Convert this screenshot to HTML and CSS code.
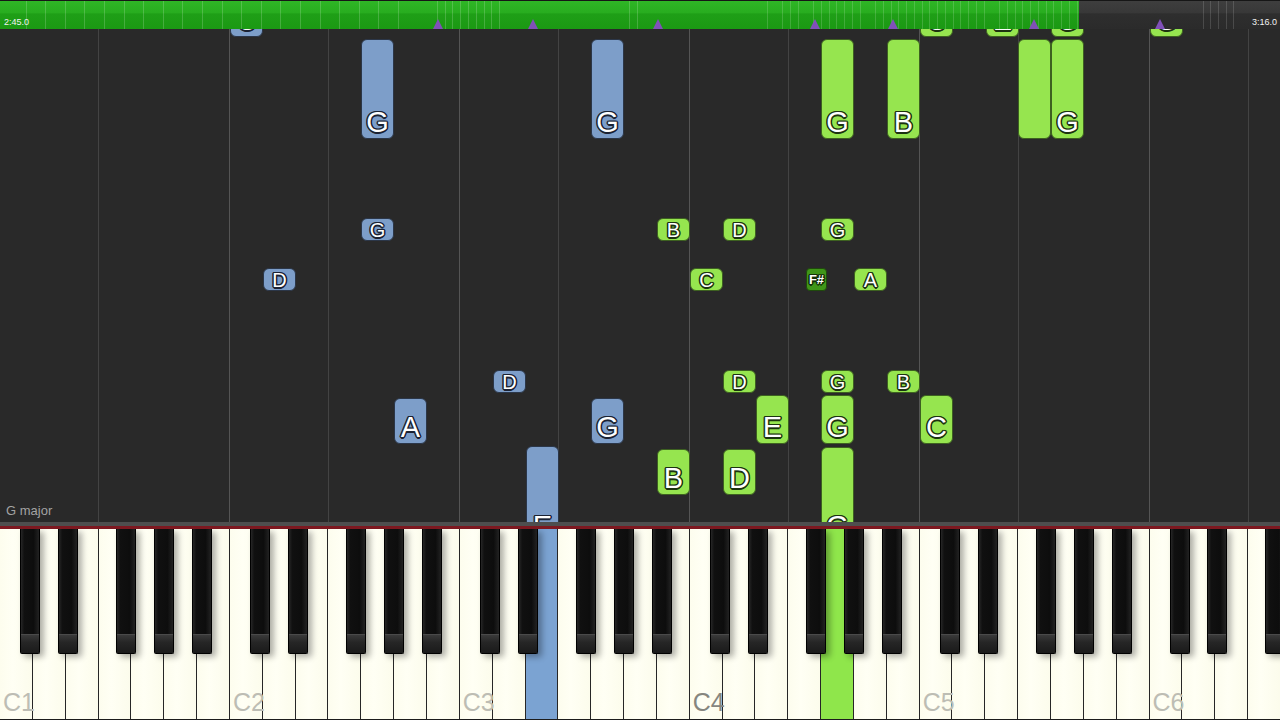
FILE: index.html
```html
<!DOCTYPE html>
<html>
<head>
<meta charset="utf-8">
<link rel="stylesheet" href="styles.css">
</head>
<body>
<div class="screen">
  <div class="bar">
    <div class="played"></div>
    <div class="rest"></div>
    <span class="time start">2:45.0</span>
    <span class="time end">3:16.0</span>
    <i class="mark" style="left:433px"></i>
    <i class="mark" style="left:528px"></i>
    <i class="mark" style="left:653px"></i>
    <i class="mark" style="left:810px"></i>
    <i class="mark" style="left:888px"></i>
    <i class="mark" style="left:1029px"></i>
    <i class="mark" style="left:1155px"></i>
  </div>

  <div class="roll">
    <!-- notes partly hidden under the bar -->
    <div class="note blue lg" style="left:230px;top:-52px;height:60px"><span>C</span></div>
    <div class="note green lg" style="left:920px;top:-52px;height:60px"><span>C</span></div>
    <div class="note green lg" style="left:986px;top:-52px;height:60px"><span>E</span></div>
    <div class="note green lg" style="left:1051px;top:-52px;height:60px"><span>G</span></div>
    <div class="note green lg" style="left:1150px;top:-52px;height:60px"><span>G</span></div>

    <!-- long notes -->
    <div class="note blue lg" style="left:361px;top:10px;height:100px"><span>G</span></div>
    <div class="note blue lg" style="left:591px;top:10px;height:100px"><span>G</span></div>
    <div class="note green lg" style="left:821px;top:10px;height:100px"><span>G</span></div>
    <div class="note green lg" style="left:887px;top:10px;height:100px"><span>B</span></div>
    <div class="note green lg" style="left:1018px;top:10px;height:100px"></div>
    <div class="note green lg" style="left:1051px;top:10px;height:100px"><span>G</span></div>

    <!-- short notes row 1 -->
    <div class="note blue sm" style="left:361px;top:189px"><span>G</span></div>
    <div class="note green sm" style="left:657px;top:189px"><span>B</span></div>
    <div class="note green sm" style="left:723px;top:189px"><span>D</span></div>
    <div class="note green sm" style="left:821px;top:189px"><span>G</span></div>

    <!-- short notes row 2 -->
    <div class="note blue sm" style="left:263px;top:239px"><span>D</span></div>
    <div class="note green sm" style="left:690px;top:239px"><span>C</span></div>
    <div class="note dark tiny" style="left:806px;top:239px"><span>F#</span></div>
    <div class="note green sm" style="left:854px;top:239px"><span>A</span></div>

    <!-- short notes row 3 -->
    <div class="note blue sm" style="left:493px;top:341px"><span>D</span></div>
    <div class="note green sm" style="left:723px;top:341px"><span>D</span></div>
    <div class="note green sm" style="left:821px;top:341px"><span>G</span></div>
    <div class="note green sm" style="left:887px;top:341px"><span>B</span></div>

    <!-- medium notes -->
    <div class="note blue lg" style="left:394px;top:369px;height:46px"><span>A</span></div>
    <div class="note blue lg" style="left:591px;top:369px;height:46px"><span>G</span></div>
    <div class="note green lg" style="left:756px;top:366px;height:49px"><span>E</span></div>
    <div class="note green lg" style="left:821px;top:366px;height:49px"><span>G</span></div>
    <div class="note green lg" style="left:920px;top:366px;height:49px"><span>C</span></div>
    <div class="note green lg" style="left:657px;top:420px;height:46px"><span>B</span></div>
    <div class="note green lg" style="left:723px;top:420px;height:46px"><span>D</span></div>

    <!-- notes reaching the keyboard -->
    <div class="note blue lg" style="left:526px;top:417px;height:97px"><span>E</span></div>
    <div class="note green lg" style="left:821px;top:418px;height:96px"><span>G</span></div>

    <span class="key-name">G major</span>
  </div>

  <div class="rail"></div>

  <div class="keyboard">
    <div class="wk"><i class="bk cs"></i><span class="oct">C1</span></div>
    <div class="wk"><i class="bk ds"></i></div>
    <div class="wk"></div>
    <div class="wk"><i class="bk fs"></i></div>
    <div class="wk"><i class="bk gs"></i></div>
    <div class="wk"><i class="bk as"></i></div>
    <div class="wk"></div>

    <div class="wk"><i class="bk cs"></i><span class="oct">C2</span></div>
    <div class="wk"><i class="bk ds"></i></div>
    <div class="wk"></div>
    <div class="wk"><i class="bk fs"></i></div>
    <div class="wk"><i class="bk gs"></i></div>
    <div class="wk"><i class="bk as"></i></div>
    <div class="wk"></div>

    <div class="wk"><i class="bk cs"></i><span class="oct">C3</span></div>
    <div class="wk"><i class="bk ds"></i></div>
    <div class="wk hl-blue"></div>
    <div class="wk"><i class="bk fs"></i></div>
    <div class="wk"><i class="bk gs"></i></div>
    <div class="wk"><i class="bk as"></i></div>
    <div class="wk"></div>

    <div class="wk"><i class="bk cs"></i><span class="oct mid">C4</span></div>
    <div class="wk"><i class="bk ds"></i></div>
    <div class="wk"></div>
    <div class="wk"><i class="bk fs"></i></div>
    <div class="wk hl-green"><i class="bk gs"></i></div>
    <div class="wk"><i class="bk as"></i></div>
    <div class="wk"></div>

    <div class="wk"><i class="bk cs"></i><span class="oct">C5</span></div>
    <div class="wk"><i class="bk ds"></i></div>
    <div class="wk"></div>
    <div class="wk"><i class="bk fs"></i></div>
    <div class="wk"><i class="bk gs"></i></div>
    <div class="wk"><i class="bk as"></i></div>
    <div class="wk"></div>

    <div class="wk"><i class="bk cs"></i><span class="oct">C6</span></div>
    <div class="wk"><i class="bk ds"></i></div>
    <div class="wk"></div>
    <div class="wk"><i class="bk fs"></i></div>
  </div>
</div>
</body>
</html>
```

FILE: styles.css
```css
* { box-sizing: border-box; }

html, body {
  margin: 0;
  background: #292929;
}

body {
  width: 1280px;
  height: 720px;
  overflow: hidden;
  font-family: "Liberation Sans", Arial, sans-serif;
}

.screen {
  display: flex;
  flex-direction: column;
  height: 720px;
}

/* ---------- top progress bar ---------- */
.bar {
  position: relative;
  flex: none;
  height: 29px;
  display: flex;
  border-top: 1px solid #161616;
  z-index: 3;
}

.played {
  width: 1079px;
  background:
    repeating-linear-gradient(90deg, transparent 0 18.6px, rgba(255,255,255,.18) 18.6px 19.6px) 7px 0 / 410px 100% no-repeat,
    repeating-linear-gradient(90deg, transparent 0 6.8px, rgba(255,255,255,.18) 6.8px 7.8px) 430px 0 / 72px 100% no-repeat,
    linear-gradient(90deg, rgba(255,255,255,.18) 0 1px, transparent 1px 8px, rgba(255,255,255,.18) 8px 9px) 629px 0 / 9px 100% no-repeat,
    repeating-linear-gradient(90deg, transparent 0 6.75px, rgba(255,255,255,.16) 6.75px 7.75px) 760px 0 / 319px 100% no-repeat,
    linear-gradient(180deg, #2fb626 0, #28ad1f 42%, #1f9f17 46%, #1b9913 100%);
}

.rest {
  flex: 1;
  background:
    repeating-linear-gradient(90deg, transparent 0 6.7px, rgba(255,255,255,.14) 6.7px 7.7px) 117px 0 / 40px 100% no-repeat,
    linear-gradient(180deg, #3e3e3e 0, #383838 42%, #2e2e2e 46%, #2b2b2b 100%);
}

.time {
  position: absolute;
  bottom: 2px;
  font-size: 9px;
  line-height: 10px;
  color: #f2f2f2;
  white-space: nowrap;
}
.time.start { left: 4px; }
.time.end { left: 1252px; }

.mark {
  position: absolute;
  bottom: 0;
  width: 10px;
  height: 10px;
  background: #8050b8;
  clip-path: polygon(50% 0, 100% 100%, 0 100%);
}

/* ---------- piano roll ---------- */
.roll {
  position: relative;
  flex: none;
  height: 493px;
  overflow: hidden;
  background: repeating-linear-gradient(90deg,
    transparent 0 98px, #434343 98px 99px,
    transparent 99px 229px, #545454 229px 230px);
}

.note {
  position: absolute;
  width: 33px;
  display: flex;
  justify-content: center;
  align-items: flex-end;
  border: 1px solid;
  border-radius: 6px;
  color: #fff;
  line-height: 1;
}

.note.blue {
  background: #7d9ec9;
  border-color: #2b3648;
  --ol: #1a2233;
}
.note.green {
  background: #96e54f;
  border-color: #3d6120;
  --ol: #1c3310;
}
.note.dark {
  background: #3f9618;
  border-color: #1f4a0c;
  --ol: #143008;
  width: 21px;
  height: 23px;
  border-radius: 4px;
  align-items: center;
}

.note span {
  text-shadow:
    -1.5px 0 0 var(--ol), 1.5px 0 0 var(--ol),
    0 -1.5px 0 var(--ol), 0 1.5px 0 var(--ol),
    -1px -1px 0 var(--ol), 1px -1px 0 var(--ol),
    -1px 1px 0 var(--ol), 1px 1px 0 var(--ol);
}

.note.lg { font-size: 29px; padding-bottom: 1px; }
.note.sm { font-size: 20px; height: 23px; padding-bottom: 0; }
.note.tiny { font-size: 13px; font-weight: bold; }

.key-name {
  position: absolute;
  left: 6px;
  bottom: 4px;
  font-size: 13px;
  line-height: 15px;
  color: #a3a3a3;
}

/* ---------- rail ---------- */
.rail {
  flex: none;
  height: 7px;
  background: #4e4e4e;
  border-bottom: 3px solid #7d1820;
}

/* ---------- keyboard ---------- */
.keyboard {
  flex: 1;
  display: flex;
  position: relative;
  overflow: hidden;
  background: #1c1c1c;
}

.wk {
  position: relative;
  flex: 0 0 32.857px;
  height: 190px;
  background: linear-gradient(90deg, #fdfdee, #fffff4 40%, #fcfcec);
  border-right: 1px solid #262626;
}
.wk.hl-blue { background: #7ba3d2; }
.wk.hl-green { background: #8fe64b; }

.oct {
  position: absolute;
  left: 3px;
  bottom: 4px;
  font-size: 25px;
  line-height: 25px;
  color: #bdbdb4;
  z-index: 1;
}
.oct.mid { color: #86867f; }

.bk {
  position: absolute;
  top: 0;
  width: 20px;
  height: 125px;
  z-index: 2;
  border: 1px solid #000;
  border-top: none;
  border-radius: 0 0 2px 2px;
  background: linear-gradient(90deg, #262626 0, #101010 18%, #0d0d0d 70%, #222 100%);
  box-shadow: 4px 3px 6px rgba(0, 0, 0, .32);
}
.bk::after {
  content: "";
  position: absolute;
  left: 0;
  right: 0;
  bottom: 0;
  height: 18px;
  border-top: 1px solid #4a4a4a;
  background: linear-gradient(180deg, #3a3a3a, #262626 40%, #1a1a1a);
}

.bk.cs { left: 20px; }
.bk.ds { left: 25.1px; }
.bk.fs { left: 17.4px; }
.bk.gs { left: 22.6px; }
.bk.as { left: 27.7px; }
```
